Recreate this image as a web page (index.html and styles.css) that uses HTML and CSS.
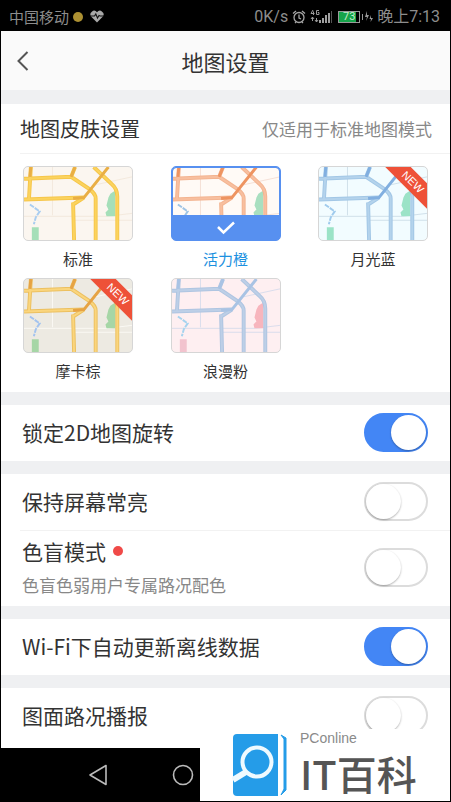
FILE: index.html
```html
<!DOCTYPE html>
<html lang="zh-CN">
<head>
  <meta charset="UTF-8">
  <meta name="viewport" content="width=device-width, initial-scale=1">
  <title>地图设置</title>
  <link rel="stylesheet" href="styles.css">
</head>
<body>
  <!-- shared street map, colours come from the skin class -->
  <svg class="defs" aria-hidden="true">
    <symbol id="map" viewBox="0 0 110 74" preserveAspectRatio="none">
      <g fill="none">
        <path class="thin" d="M29 0V49M0 50H85L110 47M73 18L110 10M51 54H110"/>
        <path class="park" d="M86 31L88 27L91 25L93 24V50H84L83 46L86 43L84 39Z"/>
        <path class="park low" d="M8 61H15V74H8Z"/>
        <path class="river" d="M6 38L16 45L12 51L10 58"/>
        <g class="road">
          <path d="M7 0L5 33M0 12L48 10L66 22Q73 27 73 32V74M48 10L52 0"/>
          <path d="M50 36L51 74M50 38L61 31M71 0L89 17Q95 22 95 30V74"/>
          <path d="M0 33L61 31"/>
        </g>
        <g class="road-in">
          <path d="M7 0L5 33M0 12L48 10L66 22Q73 27 73 32V74M48 10L52 0"/>
          <path d="M50 36L51 74M50 38L61 31M71 0L89 17Q95 22 95 30V74"/>
          <path d="M0 33L61 31"/>
        </g>
        <path class="main" d="M50 32L61 31L86 0M48 10L52 0M7 0L6 10"/>
      </g>
    </symbol>
  </svg>

  <div class="screen">
    <div class="status">
      <span class="carrier">中国移动</span>
      <span class="coin"></span>
      <svg class="heart" width="14" height="13" viewBox="0 0 14 13">
        <path d="M7 12.500L1.300 6.800A3.600 3.600 0 0 1 7 2.200A3.600 3.600 0 0 1 12.700 6.800Z" fill="#a8a8a8"/>
        <path d="M0 6H4.500L5.800 4L7.500 8L9 5.500L10 6H14" fill="none" stroke="#111" stroke-width="1.100"/>
      </svg>
      <span class="speed">0K/s</span>
      <svg width="14" height="14" viewBox="0 0 14 14" fill="none" stroke="#a5a5a5" stroke-width="1.300">
        <circle cx="7" cy="7.500" r="5"/>
        <path d="M7 4.500V8L9 9M1 3.500L4 1M13 3.500L10 1M3 13L4 12M11 13L10 12"/>
      </svg>
      <svg class="signal" width="22" height="15" viewBox="0 0 22 15">
        <g fill="none" stroke="#999" stroke-width="1">
          <path d="M3 1L1 4.500H4.500M3.500 2.500V6M9 1.500H6.500V5.500H9V3.500H7.800M2.500 8V12M1 10L2.500 8L4 10M6.500 9V13M5 11L6.500 13L8 11"/>
        </g>
        <path d="M9 11H11V14H9ZM12 9H14V14H12ZM15 6H17V14H15ZM18 4H20V14H18Z" fill="#a0a0a0"/>
        <path d="M21.500 2V14" stroke="#555"/>
      </svg>
      <span class="battery">73</span>
      <svg class="bolt" width="11" height="12" viewBox="0 0 11 12">
        <path d="M.5 3V9" stroke="#999"/>
        <path d="M5 0L3 6H5L4 10L7 4H5ZM9 4L7.500 8H9L8.500 11L11 7H9Z" fill="#999"/>
      </svg>
      <span class="time">晚上7:13</span>
    </div>

    <header class="header">
      <button class="back" aria-label="返回">
        <svg width="12" height="20" viewBox="0 0 12 20" fill="none" stroke="#555" stroke-width="2">
          <path d="M10.500 1L1.500 10L10.500 19"/>
        </svg>
      </button>
      <h1>地图设置</h1>
    </header>

    <main class="settings">
      <section class="group skins">
        <div class="skins-head">
          <h2>地图皮肤设置</h2>
          <span class="note">仅适用于标准地图模式</span>
        </div>
        <div class="skin-list">
          <button class="skin standard">
            <span class="thumb"><svg><use href="#map"/></svg></span>
            <span class="skin-name">标准</span>
          </button>
          <button class="skin orange selected">
            <span class="thumb">
              <svg><use href="#map"/></svg>
              <span class="tick">
                <svg width="18" height="14" viewBox="0 0 18 14" fill="none" stroke="#fff" stroke-width="2.500"><path d="M1 6L6.500 11.500L17 1.500"/></svg>
              </span>
            </span>
            <span class="skin-name">活力橙</span>
          </button>
          <button class="skin blue">
            <span class="thumb"><svg><use href="#map"/></svg><span class="new">NEW</span></span>
            <span class="skin-name">月光蓝</span>
          </button>
          <button class="skin mocha">
            <span class="thumb"><svg><use href="#map"/></svg><span class="new">NEW</span></span>
            <span class="skin-name">摩卡棕</span>
          </button>
          <button class="skin pink">
            <span class="thumb"><svg><use href="#map"/></svg></span>
            <span class="skin-name">浪漫粉</span>
          </button>
        </div>
      </section>

      <section class="group">
        <div class="row">
          <label for="lock">锁定2D地图旋转</label>
          <input class="switch" type="checkbox" id="lock" checked>
        </div>
      </section>

      <section class="group">
        <div class="row">
          <label for="awake">保持屏幕常亮</label>
          <input class="switch" type="checkbox" id="awake">
        </div>
        <div class="row tall">
          <label for="blind">
            <span class="dot">色盲模式</span>
            <small>色盲色弱用户专属路况配色</small>
          </label>
          <input class="switch" type="checkbox" id="blind">
        </div>
      </section>

      <section class="group">
        <div class="row">
          <label for="wifi">Wi-Fi下自动更新离线数据</label>
          <input class="switch" type="checkbox" id="wifi" checked>
        </div>
      </section>

      <section class="group">
        <div class="row">
          <label for="traffic">图面路况播报</label>
          <input class="switch" type="checkbox" id="traffic">
        </div>
      </section>
    </main>

    <nav class="navbar">
      <button aria-label="返回键">
        <svg width="20" height="22" viewBox="0 0 20 22" fill="none" stroke="#bbb" stroke-width="1.600" stroke-linejoin="round"><path d="M18 1.500V20.500L2 11Z"/></svg>
      </button>
      <button aria-label="主屏幕">
        <svg width="22" height="22" viewBox="0 0 22 22" fill="none" stroke="#bbb" stroke-width="1.600"><circle cx="11" cy="11" r="9.500"/></svg>
      </button>
    </nav>

    <div class="watermark">
      <svg width="56" height="64" viewBox="0 0 56 64">
        <path d="M5 1H46V63H5Q1 63 1 59V5Q1 1 5 1Z" fill="#259ce8"/>
        <path d="M49 2L54 5V57L49 62L52 56V6Z" fill="#259ce8" stroke="#259ce8"/>
        <circle cx="25" cy="29" r="14.500" fill="none" stroke="#effaff" stroke-width="4"/>
        <path d="M14 39L1 47" stroke="#effaff" stroke-width="6"/>
      </svg>
      <div class="brand">
        <span class="brand-small">PConline</span>
        <span class="brand-big">IT百科</span>
      </div>
    </div>
  </div>
</body>
</html>
```
FILE: styles.css
```css
* {
  margin: 0;
  padding: 0;
  box-sizing: border-box;
}

body {
  background: #000;
  font-family: "Noto Sans CJK SC", sans-serif;
  color: #333;
}

button {
  border: none;
  background: none;
  font-family: inherit;
  color: inherit;
  cursor: pointer;
}

svg {
  display: block;
  flex: none;
}

.defs {
  position: absolute;
  width: 0;
  height: 0;
}

.screen {
  position: relative;
  display: flex;
  flex-direction: column;
  min-height: 100vh;
  padding: 0 1px 1px;
}

/* status bar */
.status {
  display: flex;
  align-items: center;
  height: 31px;
  padding: 2px 10px 0 8px;
  color: #8d8d8d;
  font-size: 15px;
  line-height: 20px;
  white-space: nowrap;
}

.coin {
  width: 10px;
  height: 10px;
  margin: 0 7px 0 4px;
  border-radius: 50%;
  background: #ac9032;
}

.speed {
  margin: 0 4px 0 auto;
  font-family: Roboto, sans-serif;
  font-size: 16px;
}

.signal {
  margin: 0 6px 0 4px;
}

.battery {
  width: 22px;
  height: 12px;
  border: 1px solid #9a9a9a;
  background: linear-gradient(to right, #16a34a 17px, #000 17px);
  color: #c5ecc9;
  font-family: Roboto, sans-serif;
  font-size: 11px;
  line-height: 10px;
  text-align: center;
}

.bolt {
  margin: 0 4px 0 2px;
}

.time {
  font-family: Roboto, "Noto Sans CJK SC", sans-serif;
  font-size: 16px;
}

/* header */
.header {
  display: grid;
  grid-template-columns: 44px 1fr 44px;
  align-items: center;
  height: 59px;
  background: #fafafa;
}

.header h1 {
  font-size: 22px;
  font-weight: 400;
  line-height: 32px;
  text-align: center;
}

.back {
  display: flex;
  justify-content: center;
  padding: 10px 0;
}

/* groups */
.settings {
  flex: 1;
  display: flex;
  flex-direction: column;
  gap: 13px;
  padding-top: 14px;
  background: #eff0f2;
}

.group {
  background: #fff;
}

.group:last-child {
  flex: 1;
}

.skins {
  padding-bottom: 10px;
}

.skins-head {
  display: flex;
  justify-content: space-between;
  align-items: center;
  height: 50px;
  margin-left: 19px;
  padding-right: 18px;
  border-bottom: 1px solid #f2f2f2;
}

.skins-head h2 {
  font-size: 20px;
  font-weight: 400;
}

.note {
  color: #888;
  font-size: 17px;
}

.skin-list {
  display: grid;
  grid-template-columns: repeat(3, 110px);
  justify-content: space-between;
  row-gap: 8px;
  padding: 12px 22px 0;
}

.skin {
  display: flex;
  flex-direction: column;
  gap: 6px;
  font-size: 15px;
  line-height: 23px;
}

.skin-name {
  text-align: center;
}

.thumb {
  position: relative;
  height: 75px;
  border: 1px solid #d6d6d6;
  border-radius: 5px;
  background: var(--land);
  overflow: hidden;
}

.thumb > svg {
  width: 100%;
  height: 100%;
}

.selected .thumb {
  border-color: #5790f0;
  box-shadow: inset 0 0 0 1px #5790f0;
}

.selected .skin-name {
  color: #1d91e0;
}

.tick {
  position: absolute;
  left: 0;
  right: 0;
  bottom: 0;
  display: flex;
  justify-content: center;
  align-items: center;
  height: 25px;
  background: #5790f0;
}

/* frame stays above the map */
.selected .thumb::after {
  content: "";
  position: absolute;
  inset: 0;
  border: 1px solid #5790f0;
  border-radius: 4px;
}

.new {
  position: absolute;
  top: 6px;
  right: -28px;
  width: 84px;
  background: #ee5138;
  color: #fff;
  font-family: "Liberation Sans", sans-serif;
  font-size: 11px;
  line-height: 18px;
  text-align: center;
  transform: rotate(45deg);
}

/* map skins */
.standard {
  --land: #fbf6f0;
  --thin: #f3e9dc;
  --road: #f6c64a;
  --road-in: #fbd35e;
  --main: #e9ae45;
  --park: #a5dfb9;
  --low: #a5dfb9;
  --river: #a9cdf0;
}

.orange {
  --land: #fffaf6;
  --thin: #f5dfd5;
  --road: #f3b491;
  --road-in: #f8bf9f;
  --main: #ee9461;
  --park: #a9dfc0;
  --low: #a9dfc0;
  --river: #9fc4e4;
}

.blue {
  --land: #f2fcff;
  --thin: #cfdfea;
  --road: #a2c7e6;
  --road-in: #b4d3ec;
  --main: #81afe0;
  --park: #9be3c7;
  --low: #9be3c7;
  --river: #a0cbed;
}

.mocha {
  --land: #edeae2;
  --thin: #faf9f4;
  --road: #ecc060;
  --road-in: #fad57d;
  --main: #e6a344;
  --park: #a6d6a6;
  --low: #a6d6a6;
  --river: #a3c3ef;
}

.pink {
  --land: #feeff1;
  --thin: #d9dcec;
  --road: #afc5e1;
  --road-in: #bdcfe7;
  --main: #a9c3e4;
  --park: #f7b5bd;
  --low: #f2c3ce;
  --river: #a6d3ee;
}

.thin {
  stroke: var(--thin);
  stroke-width: 1;
}

.road {
  stroke: var(--road);
  stroke-width: 4;
}

.road-in {
  stroke: var(--road-in);
  stroke-width: 2;
}

.main {
  stroke: var(--main);
  stroke-width: 3;
}

.park {
  fill: var(--park);
}

.low {
  fill: var(--low);
}

.river {
  stroke: var(--river);
  stroke-width: 2;
  stroke-dasharray: 5 1;
}

/* setting rows */
.row {
  display: flex;
  justify-content: space-between;
  align-items: center;
  min-height: 56px;
  margin-left: 19px;
  padding: 0 22px 2px 2px;
}

.row + .row {
  border-top: 1px solid #f2f2f2;
}

.row label {
  font-size: 21px;
  line-height: 32px;
}

.row.tall {
  min-height: 76px;
}

.row small {
  display: block;
  margin-top: 2px;
  color: #888;
  font-size: 17px;
}

.dot {
  display: flex;
  align-items: center;
  gap: 7px;
}

.dot::after {
  content: "";
  width: 10px;
  height: 10px;
  border-radius: 50%;
  background: #f04a48;
}

.switch {
  appearance: none;
  flex: none;
  width: 64px;
  height: 39px;
  border: 2px solid #dcdcdc;
  border-radius: 20px;
  background: #fff;
  cursor: pointer;
}

.switch::before {
  content: "";
  display: block;
  width: 35px;
  height: 35px;
  border-radius: 50%;
  background: #fff;
  box-shadow: 0 1px 2px rgba(0, 0, 0, 0.3);
}

.switch:checked {
  border-color: #4386f5;
  background: #4386f5;
}

.switch:checked::before {
  margin-left: auto;
}

/* bottom keys */
.navbar {
  display: flex;
  align-items: center;
  gap: 64px;
  height: 53px;
  padding-left: 87px;
}

.watermark {
  position: absolute;
  right: 1px;
  bottom: 1px;
  display: flex;
  align-items: center;
  gap: 12px;
  width: 250px;
  height: 72px;
  padding-left: 32px;
  background: #fff;
}

.brand {
  display: flex;
  flex-direction: column;
  color: #555;
}

.brand-small {
  color: #8a8a8a;
  font-family: "Liberation Sans", sans-serif;
  font-size: 14px;
  line-height: 16px;
}

.brand-big {
  font-size: 40px;
  font-weight: 500;
  line-height: 54px;
}
```
